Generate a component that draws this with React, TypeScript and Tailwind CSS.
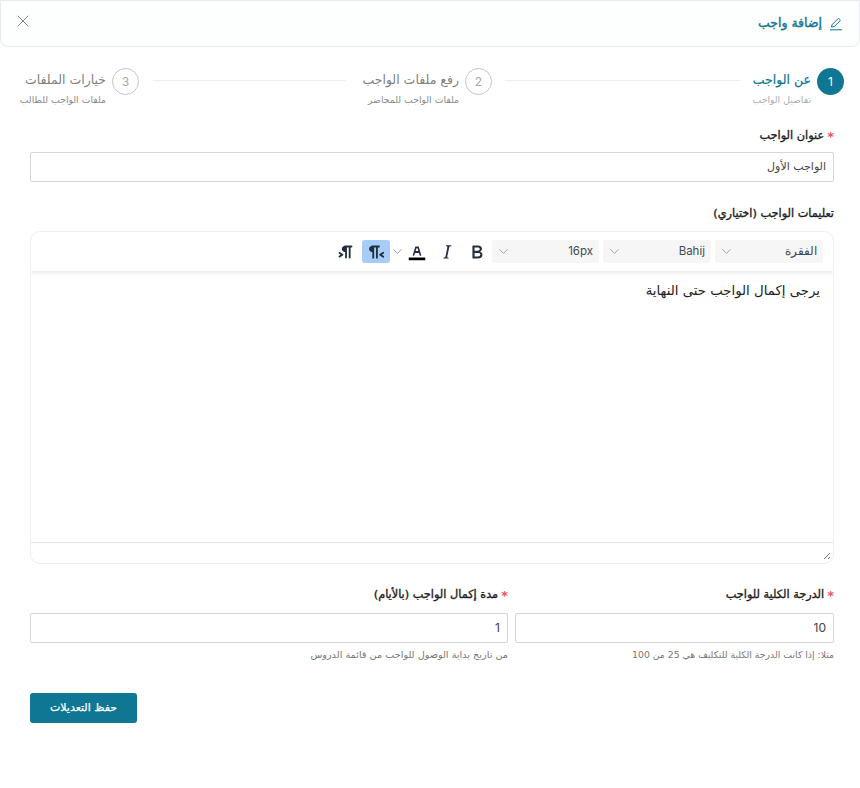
import React from 'react';
import { ChevronDown, X } from 'lucide-react';

const Required = () => <span className="text-[#f0525f] ml-[3px] text-[13px] font-bold leading-none [-webkit-text-stroke:0px]">*</span>;

const Step = ({ n, title, sub, active, width }: { n: number; title: string; sub: string; active?: boolean; width: string }) => (
  <div className={`flex items-start gap-[6px] shrink-0 whitespace-nowrap ${width}`}>
    <div
      className={
        active
          ? 'w-[27px] h-[27px] rounded-full bg-[#0f7694] text-white flex items-center justify-center text-[12px] font-["Inter",sans-serif] shrink-0'
          : 'w-[27px] h-[27px] rounded-full border border-[#c4c4c4] text-[#a8a8a8] flex items-center justify-center text-[12px] font-["Inter",sans-serif] shrink-0'
      }
    >
      {n}
    </div>
    <div className="flex flex-col">
      <span className={active ? 'text-[12.5px] leading-[23px] text-[#0f7694] [-webkit-text-stroke:0.2px_#0f7694]' : 'text-[12.5px] leading-[23px] text-[#808080]'}>{title}</span>
      <span className={active ? 'text-[9.3px] leading-[14px] mt-[2px] text-[#a9aeb6]' : 'text-[9.3px] leading-[14px] mt-[2px] text-[#8a8a8a]'}>{sub}</span>
    </div>
  </div>
);

const Select = ({ label, width }: { label: string; width: string }) => (
  <div className={`h-[23px] ${width} bg-[#f6f6f6] rounded-[3px] flex items-center justify-between pr-[6px] pl-[4px] text-[11.5px] text-[#444b55] font-["Inter",sans-serif]`}>
    <span>{label}</span>
    <ChevronDown className="w-[15px] h-[15px] text-[#9aa0a8]" strokeWidth={1.5} />
  </div>
);

const Icon = ({ d, extra }: { d: string; extra?: string }) => (
  <svg viewBox="0 0 24 24" className="w-[22px] h-[22px] shrink-0 fill-[#222f3e]">
    {extra && <path d={extra} className="fill-black" />}
    <path d={d} />
  </svg>
);

const labelClass = 'flex items-center h-[22px] text-[11.3px] text-[#1d1d1d] whitespace-nowrap [-webkit-text-stroke:0.35px_#1d1d1d]';

export default function App() {
  return (
    <div dir="rtl" className='w-[860px] h-[788px] bg-white overflow-hidden font-["DejaVu_Sans","Noto_Sans",sans-serif]'>
      <header className="h-[47px] flex items-center justify-between pr-[16px] pl-[12px] border border-[#e8eaed] rounded-b-lg bg-[#fdfefe]">
        <div className="flex items-center gap-[7px] text-[#0f7694] text-[12.5px] [-webkit-text-stroke:0.4px_#0f7694]">
          <svg viewBox="0 0 14 14" className="w-[14px] h-[14px] stroke-[#0f7694]" fill="none" strokeWidth={1}>
            <path d="M2.5 10l.6-2.4L8.7 2a1.2 1.2 0 0 1 1.7 0l.4.4a1.2 1.2 0 0 1 0 1.7L5.2 9.6 2.5 10z" />
            <path d="M1 12.8h12" />
          </svg>
          <span>إضافة واجب</span>
        </div>
        <X className="w-[20px] h-[20px] text-[#777] mt-[-5px]" strokeWidth={1.1} />
      </header>

      <div className="flex items-start pt-[21px] pr-[16px] pl-[20px] h-[78px]">
        <Step n={1} title="عن الواجب" sub="تفاصيل الواجب" active width="w-[94px]" />
        <div className="w-[236px] h-px bg-[#eeeeee] mt-[12px] mr-[9px] ml-[13px]" />
        <Step n={2} title="رفع ملفات الواجب" sub="ملفات الواجب للمحاضر" width="w-[132px]" />
        <div className="w-[193px] h-px bg-[#eeeeee] mt-[12px] mx-[14px]" />
        <Step n={3} title="خيارات الملفات" sub="ملفات الواجب للطالب" width="w-[119px]" />
      </div>

      <div className="pr-[26px] pl-[30px]">
        <label className={labelClass}>
          <Required />
          عنوان الواجب
        </label>
        <div className="h-[30px] mt-[5px] border border-[#d6d6d6] rounded-[2px] flex items-center px-[7px] text-[11px] text-[#444]">الواجب الأول</div>

        <label className={`${labelClass} mt-[21px]`}>تعليمات الواجب (اختياري)</label>

        <div className="h-[333px] mt-[6px] border border-[#eeeeee] rounded-[10px] flex flex-col overflow-hidden">
          <div className="h-[39px] shrink-0 flex items-center pr-[10px] shadow-[0_2px_4px_rgba(34,47,62,0.1)]">
            <div className="flex gap-1">
              <Select label="الفقرة" width="w-[108px]" />
              <Select label="Bahij" width="w-[108px]" />
              <Select label="16px" width="w-[107px]" />
            </div>
            <div className="flex items-center mr-[4px]">
              <Icon d="M7.8 19c-.3 0-.5 0-.6-.2l-.2-.5V5.7c0-.2 0-.4.2-.5l.6-.2h5c1.5 0 2.7.3 3.5 1 .7.6 1.1 1.4 1.1 2.5a3 3 0 0 1-.6 1.9c-.4.6-1 1-1.6 1.2.4.1.9.3 1.3.6s.8.7 1 1.2c.3.4.4 1 .4 1.6 0 1.3-.4 2.3-1.3 3-.8.7-2.1 1-3.8 1H7.8zm5-8.3c.6 0 1.2-.1 1.6-.5.4-.3.6-.7.6-1.3 0-1.1-.8-1.7-2.3-1.7H9.3v3.5h3.4zm.5 6c.7 0 1.3-.1 1.7-.4.4-.4.6-.9.6-1.5s-.2-1-.7-1.4c-.4-.3-1-.4-2-.4H9.4v3.8h4z" />
              <div className="w-[8px]" />
              <Icon d="M16.7 4.7l-.1.9h-.3c-.6 0-1 0-1.4.3-.3.3-.4.6-.5 1.1l-2.1 9.8v.6c0 .5.4.8 1.4.8h.2l-.2.8H8l.2-.8h.2c1.1 0 1.8-.5 2-1.5l2-9.8.1-.5c0-.6-.4-.8-1.4-.8h-.3l.2-.9h5.8z" />
              <div className="w-[8px]" />
              <Icon
                extra="M3 18h18v3H3z"
                d="M8.7 16h-.8a.5.5 0 0 1-.5-.6l2.7-9c.1-.3.3-.4.5-.4h2.8c.2 0 .4.1.5.4l2.7 9a.5.5 0 0 1-.5.6h-.8a.5.5 0 0 1-.4-.4l-.7-2.2c0-.3-.3-.4-.5-.4h-3.4c-.2 0-.4.1-.5.4l-.7 2.2c0 .3-.2.4-.4.4zm2.6-7.6l-.6 2a.5.5 0 0 0 .5.6h1.6a.5.5 0 0 0 .5-.6l-.6-2c0-.3-.3-.4-.5-.4h-.4c-.2 0-.4.1-.5.4z"
              />
              <ChevronDown className="w-[15px] h-[15px] mr-[1px] text-[#8f959d]" strokeWidth={1.5} />
              <div className="w-[28px] h-[23px] bg-[#a6ccf7] rounded-[3px] flex items-center justify-center">
                <Icon d="M8 5h8v2h-2v12h-2V7h-2v12H8v-7c-.5 0-1 0-1.4-.3A3.4 3.4 0 0 1 4.8 10a3.3 3.3 0 0 1 0-2.8 3.4 3.4 0 0 1 1.8-1.8L8 5zm12 11.2a1 1 0 1 1-1 1.6l-3-2a1 1 0 0 1 0-1.6l3-2a1 1 0 1 1 1 1.6L18.4 15l1.8 1.2z" />
              </div>
              <div className="w-[5px]" />
              <Icon d="M11 5h7a1 1 0 0 1 0 2h-1v11a1 1 0 0 1-2 0V7h-2v11a1 1 0 0 1-2 0v-6c-.5 0-1 0-1.4-.3A3.4 3.4 0 0 1 7.8 10a3.3 3.3 0 0 1 0-2.8 3.4 3.4 0 0 1 1.8-1.8L11 5zM4.4 16.2L6.2 15l-1.8-1.2a1 1 0 0 1 1.2-1.6l3 2a1 1 0 0 1 0 1.6l-3 2a1 1 0 1 1-1.2-1.6z" />
            </div>
          </div>
          <div className="flex-1 pr-[13px] pt-[9px] text-[13.3px] leading-[22px] text-[#222]">يرجى إكمال الواجب حتى النهاية</div>
          <div className="h-[21px] shrink-0 border-t border-[#e6e6e6] flex items-center justify-start pr-[2px]">
            <svg viewBox="0 0 8 8" className="w-[8px] h-[8px] mt-[6px] stroke-[#777]" fill="none">
              <path d="M1 7L7 1M5 7L7 5" />
            </svg>
          </div>
        </div>

        <div className="grid grid-cols-[319px_1fr] gap-[7px] mt-[20px]">
          <div>
            <label className={labelClass}>
              <Required />
              الدرجة الكلية للواجب
            </label>
            <div className="h-[30px] mt-[7px] border border-[#d6d6d6] rounded-[2px] flex items-center px-[7px] text-[12px] text-[#444] font-['Inter',sans-serif]">10</div>
            <p className="mt-[5px] text-[9.3px] leading-[14px] text-[#777]">مثلا: إذا كانت الدرجة الكلية للتكليف هي 25 من 100</p>
          </div>
          <div>
            <label className={labelClass}>
              <Required />
              مدة إكمال الواجب (بالأيام)
            </label>
            <div className="h-[30px] mt-[7px] border border-[#d6d6d6] rounded-[2px] flex items-center px-[7px] text-[12px] text-[#444] font-['Inter',sans-serif]">1</div>
            <p className="mt-[5px] text-[9.7px] leading-[14px] text-[#777]">من تاريخ بداية الوصول للواجب من قائمة الدروس</p>
          </div>
        </div>

        <div className="flex justify-end mt-[31px]">
          <button className="w-[107px] h-[30px] bg-[#0f7694] rounded-[3px] text-white text-[11px] [-webkit-text-stroke:0.25px_#ffffff]">حفظ التعديلات</button>
        </div>
      </div>
    </div>
  );
}
